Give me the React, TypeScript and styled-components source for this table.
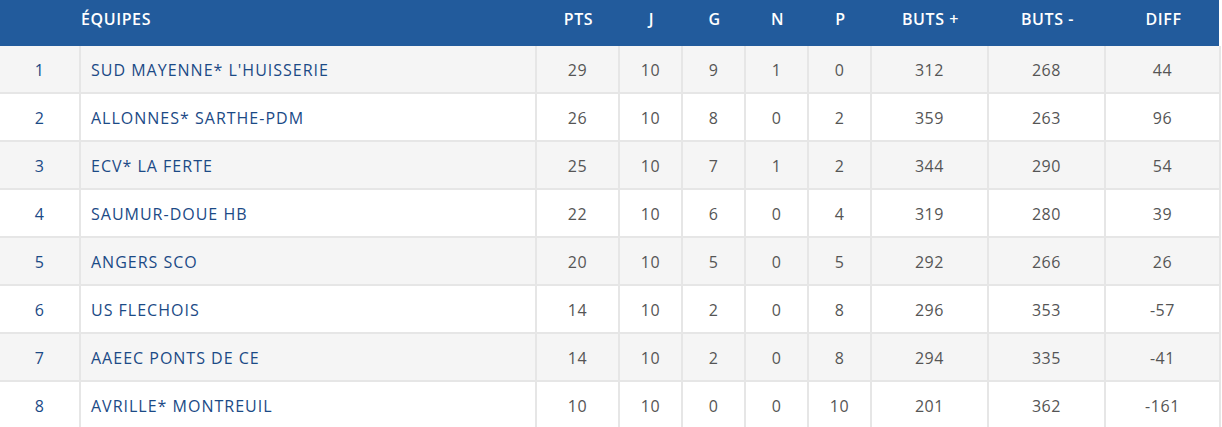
import React from "react";
import styled, { createGlobalStyle } from "styled-components";

const Global = createGlobalStyle`
  html, body { margin: 0; padding: 0; background: #ffffff; }
  body { font-family: "Open Sans", "Liberation Sans", sans-serif; }
`;

const COLS = "81px 456px 83px 63px 63px 63px 63px 117px 117px 115px";

const Wrap = styled.div`
  width: 1221px;
`;

const HeadRow = styled.div`
  display: grid;
  grid-template-columns: ${COLS};
  height: 46px;
  background: #225b9c;
  margin-right: 2px;
`;

const HeadCell = styled.div<{ $left?: boolean }>`
  display: flex;
  align-items: center;
  justify-content: ${(p) => (p.$left ? "flex-start" : "center")};
  padding-bottom: 9px;
  box-sizing: border-box;
  color: #ffffff;
  font-size: 16px;
  font-weight: 600;
  letter-spacing: 0.6px;
`;

const Row = styled.div<{ $odd: boolean }>`
  display: grid;
  grid-template-columns: ${COLS};
  height: 48px;
  background: ${(p) => (p.$odd ? "#f5f5f5" : "#ffffff")};
`;

const Cell = styled.div<{ $kind: "rank" | "team" | "num" }>`
  display: flex;
  align-items: center;
  justify-content: ${(p) => (p.$kind === "team" ? "flex-start" : "center")};
  padding-left: ${(p) => (p.$kind === "team" ? "10px" : "0")};
  padding-top: 1px;
  box-sizing: border-box;
  border-right: 2px solid #e6e6e6;
  border-bottom: 2px solid #e6e6e6;
  font-size: 16px;
  letter-spacing: ${(p) => (p.$kind === "team" ? "1px" : "0.6px")};
  color: ${(p) => (p.$kind === "num" ? "#555555" : "#1b4a86")};
`;

type Team = [number, string, number, number, number, number, number, number, number, number];

const data: Team[] = [
  [1, "SUD MAYENNE* L'HUISSERIE", 29, 10, 9, 1, 0, 312, 268, 44],
  [2, "ALLONNES* SARTHE-PDM", 26, 10, 8, 0, 2, 359, 263, 96],
  [3, "ECV* LA FERTE", 25, 10, 7, 1, 2, 344, 290, 54],
  [4, "SAUMUR-DOUE HB", 22, 10, 6, 0, 4, 319, 280, 39],
  [5, "ANGERS SCO", 20, 10, 5, 0, 5, 292, 266, 26],
  [6, "US FLECHOIS", 14, 10, 2, 0, 8, 296, 353, -57],
  [7, "AAEEC PONTS DE CE", 14, 10, 2, 0, 8, 294, 335, -41],
  [8, "AVRILLE* MONTREUIL", 10, 10, 0, 0, 10, 201, 362, -161],
];

const heads = ["PTS", "J", "G", "N", "P", "BUTS +", "BUTS -", "DIFF"];

export default function App() {
  return (
    <>
      <Global />
      <Wrap>
        <HeadRow>
          <HeadCell />
          <HeadCell $left>ÉQUIPES</HeadCell>
          {heads.map((h) => (
            <HeadCell key={h}>{h}</HeadCell>
          ))}
        </HeadRow>
        {data.map((t, i) => (
          <Row key={t[0]} $odd={i % 2 === 0}>
            <Cell $kind="rank">{t[0]}</Cell>
            <Cell $kind="team">{t[1]}</Cell>
            {t.slice(2).map((v, j) => (
              <Cell key={j} $kind="num">{v}</Cell>
            ))}
          </Row>
        ))}
      </Wrap>
    </>
  );
}
